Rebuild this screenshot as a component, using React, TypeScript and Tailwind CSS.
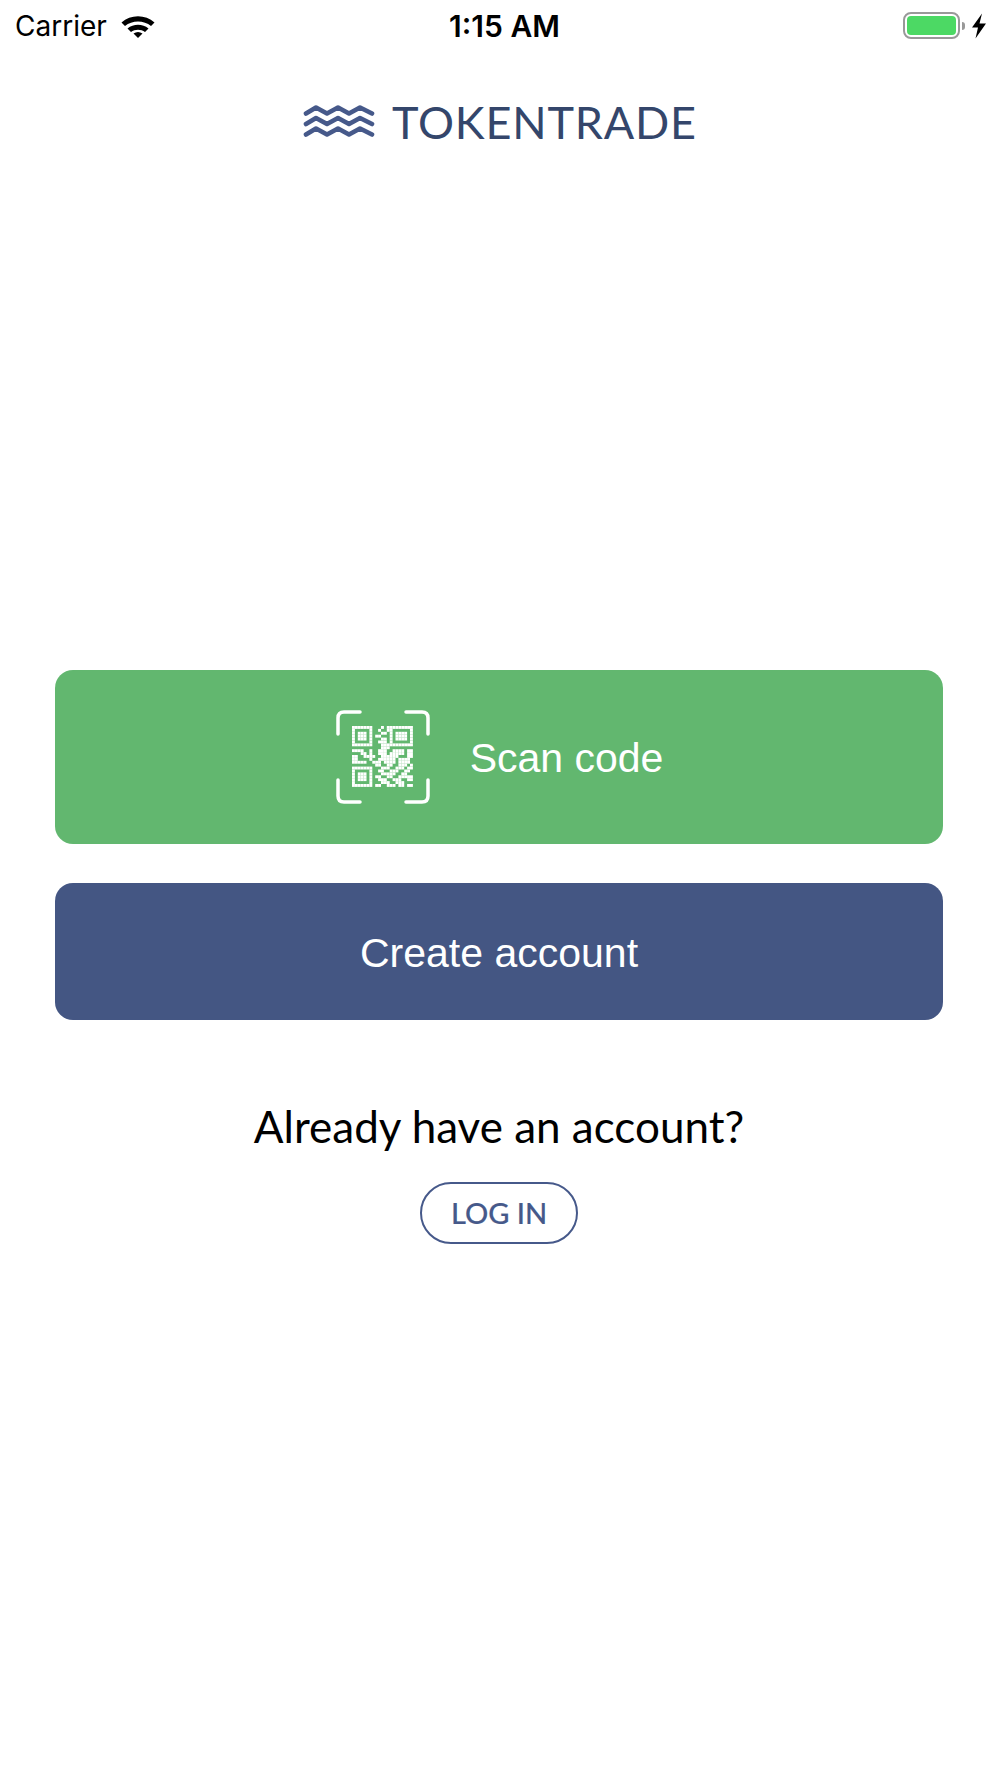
const QR_ROWS = [
  '111111100010111111111',
  '100000100100110000001',
  '101110100011010111101',
  '101110101100010111101',
  '101110100011010111101',
  '100000100111010000001',
  '111111100011111111111',
  '000000000011100000000',
  '111100100111001111011',
  '000110100111011111011',
  '110011110011111100011',
  '110000100111111011110',
  '111110011101111011110',
  '000000001100110011101',
  '111111100011100111011',
  '100000100110011100110',
  '101110100011111001100',
  '101110101100110011111',
  '101110100111001110011',
  '100000100011100111000',
  '111111101100111011011',
];

const WifiIcon = () => (
  <svg width="34" height="24" viewBox="0 0 34 24" className="ml-[14px]">
    <path d="M0.5 8.5C9.5 0 24.5 0 33.5 8.5L30 12C23 6 11 6 4 12Z" fill="#000" />
    <path d="M6.5 14.5C12.5 9.5 21.5 9.5 27.5 14.5L24 18C20 15 14 15 10 18Z" fill="#000" />
    <path d="M12.5 19.5C15.5 17.5 18.5 17.5 21.5 19.5L17 24Z" fill="#000" />
  </svg>
);

const Battery = () => (
  <div className="flex items-center">
    <div className="flex h-[27px] w-[57px] items-center justify-center rounded-[8px] border-2 border-[#999999]">
      <div className="h-[19px] w-[49px] rounded-[4px] bg-[#4cd964]" />
    </div>
    <div className="ml-[2px] h-[8px] w-[3px] rounded-r-full bg-[#999999]" />
    <svg width="16" height="26" viewBox="0 0 16 26" className="ml-[6px]">
      <path d="M11 0.5L1 14.5H7L4.5 25.5L15 10.5H8.5Z" fill="#000" />
    </svg>
  </div>
);

const StatusBar = () => (
  <div className="grid h-[50px] grid-cols-3 items-center pl-[15px] pr-[13px] pt-[1px] text-black [font-family:Inter,sans-serif]">
    <div className="flex items-center">
      <span className="text-[28px] leading-[34px]">Carrier</span>
      <WifiIcon />
    </div>
    <div className="pl-[7px] text-center text-[30px] font-semibold leading-[34px]">1:15 AM</div>
    <div className="flex justify-end">
      <Battery />
    </div>
  </div>
);

const WaveLogo = () => (
  <svg width="72" height="36" viewBox="0 0 72 36" fill="none" stroke="#46598a" strokeWidth="4.6" strokeLinecap="round" strokeLinejoin="round">
    <path d="M3 9.5L13 3.5L24 9.5L35 3.5L46 9.5L57 3.5L69 9.5" />
    <path d="M3 20L13 14L24 20L35 14L46 20L57 14L69 20" />
    <path d="M3 30.5L13 24.5L24 30.5L35 24.5L46 30.5L57 24.5L69 30.5" />
  </svg>
);

const QrIcon = () => (
  <svg width="94" height="94" viewBox="0 0 94 94">
    <g fill="none" stroke="#fff" strokeWidth="3.5" strokeLinecap="round">
      <path d="M24 2H8Q2 2 2 8V24" />
      <path d="M70 2H86Q92 2 92 8V24" />
      <path d="M2 70V86Q2 92 8 92H24" />
      <path d="M92 70V86Q92 92 86 92H70" />
    </g>
    <g transform="translate(16 16)" fill="#fff">
      {QR_ROWS.map((row, y) =>
        row.split('').map((cell, x) =>
          cell === '1' ? <rect key={`${x}-${y}`} x={x * 2.9} y={y * 2.9} width="2.9" height="2.9" /> : null,
        ),
      )}
    </g>
  </svg>
);

export default function App() {
  return (
    <div className="min-h-[1778px] bg-white">
      <StatusBar />

      <div className="mt-[45px] flex items-center justify-center gap-[17px]">
        <WaveLogo />
        <span className="text-[45px] leading-[54px] tracking-[0.8px] text-[#34466b] [font-family:Lato,sans-serif]">TOKENTRADE</span>
      </div>

      <div className="mt-[521px] flex flex-col gap-[39px] pl-[55px] pr-[57px]">
        <button className="flex h-[174px] items-center justify-center gap-[40px] rounded-[18px] bg-[#62b76f] pl-[1px] text-[41px] text-white [font-family:'Liberation_Sans',sans-serif]">
          <QrIcon />
          <span className="pt-[4px]">Scan code</span>
        </button>
        <button className="h-[137px] rounded-[18px] bg-[#445683] pt-[4px] text-[41px] text-white [font-family:'Liberation_Sans',sans-serif]">
          Create account
        </button>
      </div>

      <div className="mt-[79px] flex flex-col items-center pr-[2px] [font-family:Lato,sans-serif]">
        <p className="text-[44px] leading-[54px] text-black">Already have an account?</p>
        <button className="mt-[29px] flex h-[62px] w-[158px] items-center justify-center rounded-full border-2 border-[#46598a] text-[29px] font-medium text-[#46598a] [-webkit-text-stroke:0.2px_#46598a]">
          LOG IN
        </button>
      </div>
    </div>
  );
}
